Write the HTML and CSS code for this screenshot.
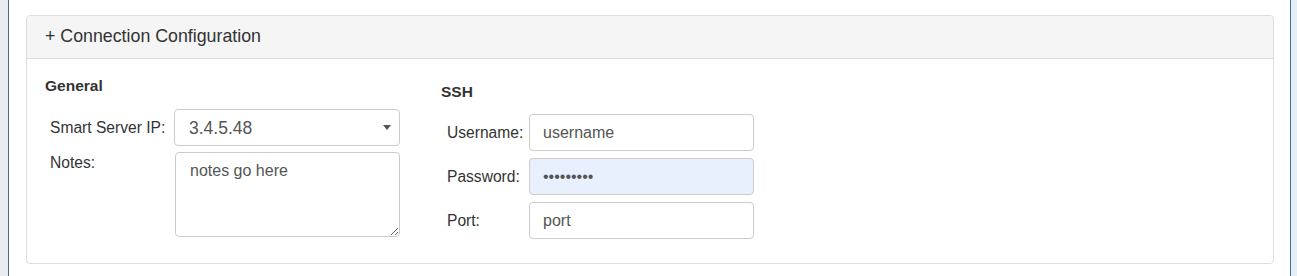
FILE: index.html
```html
<!DOCTYPE html>
<html lang="en">
<head>
	<meta charset="UTF-8">
	<title>Connection Configuration</title>
	<link rel="stylesheet" href="styles.css">
</head>
<body>
	<div class="gutter gutter-left"></div>
	<div class="frame">
		<div class="panel">
			<div class="panel-heading">+ Connection Configuration</div>
			<div class="panel-body">
				<div class="col col-general">
					<h4>General</h4>
					<div class="row">
						<label>Smart Server IP:</label>
						<span class="select-wrap">
							<select class="field">
								<option>3.4.5.48</option>
							</select>
						</span>
					</div>
					<div class="row">
						<label class="label-top">Notes:</label>
						<textarea class="field notes">notes go here</textarea>
					</div>
				</div>
				<div class="col col-ssh">
					<h4>SSH</h4>
					<div class="row">
						<label>Username:</label>
						<input class="field" type="text" value="username">
					</div>
					<div class="row">
						<label>Password:</label>
						<input class="field filled" type="password" value="secretpwd">
					</div>
					<div class="row">
						<label>Port:</label>
						<input class="field" type="text" value="port">
					</div>
				</div>
			</div>
		</div>
	</div>
	<div class="gutter gutter-right"></div>
</body>
</html>
```

FILE: styles.css
```css
html,body {
	margin:0;
	padding:0;
	background:#fff;
	overflow:hidden;
}

body {
	display:flex;
	height:276px;
	font-family:"Liberation Sans",Arial,sans-serif;
	font-size:14px;
	color:#333;
}

.gutter {
	flex:none;
	height:100%;
}

.gutter-left {
	width:8px;
	background:#e9edf1;
}

.gutter-right {
	width:6px;
	background:#e5edf7;
}

.frame {
	flex:1;
	border-left:1px solid #4d6c8c;
	border-right:1px solid #4d6c8c;
	padding:15px 16px 0 17px;
}

.panel {
	border:1px solid #ddd;
	border-radius:4px;
	background:#fff;
}

.panel-heading {
	background:#f5f5f5;
	border-bottom:1px solid #ddd;
	border-radius:3px 3px 0 0;
	padding:9px 18px 11px;
	font-size:17.8px;
	line-height:22px;
	color:#333;
}

.panel-body {
	display:flex;
	padding:17px 18px 24px;
}

.col h4 {
	margin:0 0 13px;
	font-size:15.5px;
	line-height:20px;
	font-weight:bold;
}

.col-general {
	width:355px;
	margin-right:41px;
}

.col-ssh {
	padding-top:6px;
}

.col-ssh h4 {
	margin-bottom:12px;
}

.row {
	display:flex;
	align-items:center;
	margin-bottom:7px;
}

.col-general .row {
	margin-bottom:6px;
}

.col .row:last-child {
	margin-bottom:0;
}

.row label {
	flex:none;
	padding-left:5px;
	width:124px;
	font-size:15.6px;
}

.col-ssh .row label {
	padding-left:6px;
	width:82px;
}

.row .label-top {
	align-self:flex-start;
	padding-top:2px;
}

.field {
	box-sizing:border-box;
	height:37px;
	width:225px;
	padding:0 13px;
	border:1px solid #ccc;
	border-radius:4px;
	background:#fff;
	font-family:"Liberation Sans",Arial,sans-serif;
	font-size:16px;
	color:#555;
	outline:none;
}

.filled {
	background:#e8f0fe;
}

.select-wrap {
	position:relative;
	display:block;
}

.select-wrap select {
	-webkit-appearance:none;
	appearance:none;
	width:226px;
	padding-left:14px;
	font-size:17.5px;
}

.select-wrap::after {
	content:"";
	position:absolute;
	right:9px;
	top:16px;
	border-left:4px solid transparent;
	border-right:4px solid transparent;
	border-top:5px solid #555;
	pointer-events:none;
}

.notes {
	display:block;
	height:85px;
	width:225px;
	margin-left:1px;
	padding:8px 14px;
	line-height:20px;
	resize:both;
}
```
